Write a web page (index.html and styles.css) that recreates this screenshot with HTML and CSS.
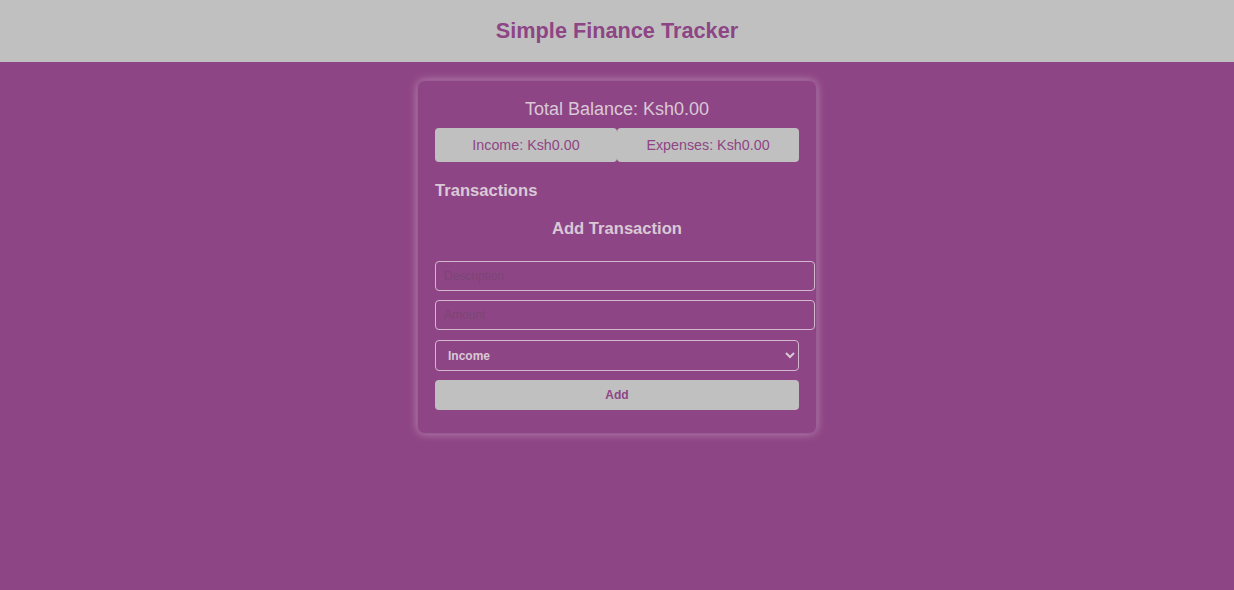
FILE: index.html
```html
<!DOCTYPE html>
<html>
<head>
<meta charset="utf-8">
<link rel="stylesheet" href="styles.css">
</head>
<body>
<header class="topbar"><h1 class="title">Simple Finance Tracker</h1></header>
<main class="page">
  <section class="card">
    <div class="balance">Total Balance: Ksh0.00</div>
    <div class="summary">
      <div class="pill">Income: Ksh0.00</div>
      <div class="pill">Expenses: Ksh0.00</div>
    </div>
    <h2 class="section-title">Transactions</h2>
    <h3 class="form-title">Add Transaction</h3>
    <form class="form">
      <input class="field" type="text" placeholder="Description">
      <input class="field" type="text" placeholder="Amount">
      <select class="select"><option>Income</option><option>Expense</option></select>
      <button class="add" type="button">Add</button>
    </form>
  </section>
</main>
</body>
</html>
```
FILE: styles.css
```css
* { box-sizing: border-box; }
html, body { margin: 0; padding: 0; }
body {
  background: #8e4585;
  font-family: "Liberation Sans", Arial, sans-serif;
  color: #d9c9d6;
  min-height: 590px;
}
.topbar {
  background: #c0c0c0;
  height: 62px;
  display: flex;
  align-items: center;
  justify-content: center;
}
.title {
  margin: 0;
  font-size: 21.7px;
  font-weight: bold;
  color: #8e4585;
}
.page {
  display: flex;
  justify-content: center;
  padding-top: 18px;
}
.card {
  width: 400px;
  padding: 17px 17px 23px;
  border: 1px solid rgba(255,255,255,0.12);
  border-radius: 8px;
  box-shadow: 0 0 8px rgba(255,255,255,0.35);
}
.balance {
  text-align: center;
  font-size: 18px;
  line-height: 22px;
}
.summary {
  display: flex;
  margin-top: 8px;
}
.pill {
  flex: 1;
  height: 34px;
  background: #c0c0c0;
  color: #8e4585;
  border-radius: 4px;
  font-size: 14.3px;
  display: flex;
  align-items: center;
  justify-content: center;
}
.section-title {
  margin: 19px 0 0;
  font-size: 16.6px;
  line-height: 20px;
  font-weight: bold;
}
.form-title {
  margin: 18px 0 0;
  text-align: center;
  font-size: 16.6px;
  line-height: 20px;
  font-weight: bold;
}
.form {
  display: flex;
  flex-direction: column;
  align-items: flex-start;
  margin-top: 22px;
}
.field {
  width: 380px;
  height: 30px;
  margin-bottom: 9px;
  padding: 0 8px;
  background: transparent;
  border: 1px solid #d4b8d0;
  border-radius: 4px;
  font-family: "Liberation Sans", Arial, sans-serif;
  font-size: 12px;
  color: #d9c9d6;
}
.field::placeholder { color: #7b4574; }
.select {
  width: 100%;
  height: 31px;
  margin-top: 1px;
  padding: 0 8px;
  background: transparent;
  border: 1px solid #d4b8d0;
  border-radius: 4px;
  font-family: "Liberation Sans", Arial, sans-serif;
  font-size: 12px;
  font-weight: bold;
  color: #d9c9d6;
}
.add {
  width: 100%;
  height: 30px;
  margin-top: 9px;
  background: #c0c0c0;
  color: #8e4585;
  border: none;
  border-radius: 4px;
  font-family: "Liberation Sans", Arial, sans-serif;
  font-size: 12px;
  font-weight: bold;
}
```
